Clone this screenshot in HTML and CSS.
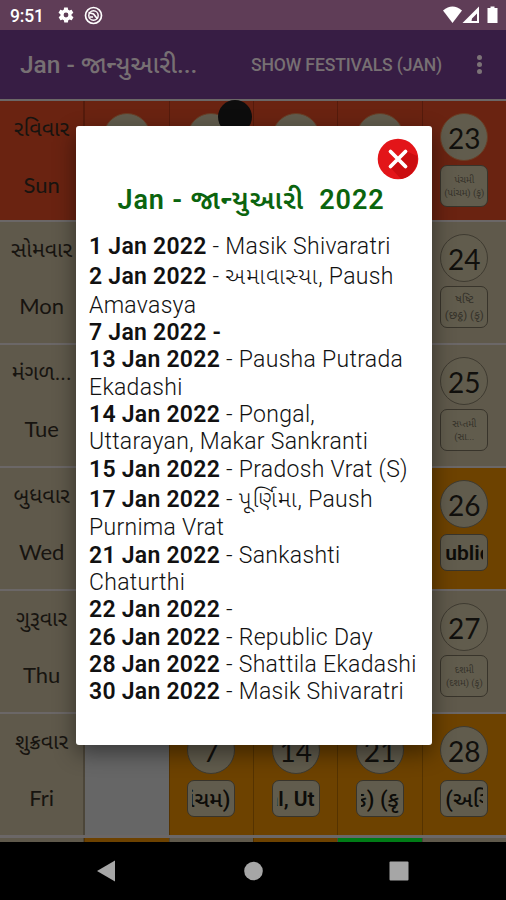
FILE: index.html
```
<!DOCTYPE html>
<html lang="gu">
<head>
  <meta charset="UTF-8">
  <title>Gujarati Calendar 2022</title>
  <link rel="stylesheet" href="styles.css">
</head>
<body>

<div class="screen">
  <div class="status-bar">
    <span class="clock">9:51</span>
    <svg class="gear" width="18" height="18" viewBox="0 0 24 24"><path fill="#fff" fill-rule="evenodd" d="M19.4 13a7.500 7.500 0 0 0 0-2l2.100-1.600c.2-.2.2-.4.1-.6l-2-3.500c-.1-.2-.4-.3-.6-.2l-2.500 1a7 7 0 0 0-1.700-1l-.4-2.600c0-.3-.2-.5-.5-.5h-4c-.2 0-.4.2-.5.4l-.4 2.700a7 7 0 0 0-1.700 1l-2.500-1c-.2-.1-.5 0-.6.2l-2 3.500c-.1.200-.1.500.1.600L4.600 11a8 8 0 0 0 0 2l-2.100 1.600c-.2.200-.2.400-.1.600l2 3.500c.1.200.4.300.6.200l2.500-1c.5.400 1.100.7 1.700 1l.4 2.600c0 .3.200.5.500.5h4c.2 0 .5-.2.500-.4l.4-2.700a7 7 0 0 0 1.700-1l2.500 1c.2.100.5 0 .6-.2l2-3.500c.1-.2.1-.5-.1-.6zM12 15.200a3.200 3.200 0 1 1 0-6.400 3.200 3.200 0 0 1 0 6.400z"/></svg>
    <svg class="ring" width="19" height="19" viewBox="0 0 19 19" fill="none" stroke="#fff"><circle cx="9.500" cy="9.500" r="8" stroke-width="1.700"/><circle cx="9.500" cy="9.500" r="4.700" stroke-width="1.500"/><path d="M4.500 6.500l5 1.500 4 5M9 11h-3" stroke-width="1.700"/></svg>
    <svg class="signals" width="57" height="18" viewBox="0 0 57 18" fill="#fff"><path d="M0 4.500Q9.500-3.500 19 4.500L9.500 17z"/><path fill-rule="evenodd" d="M19.500 17L36 .5V17zM28.500 15h5.500V7.500l-5 5z"/><path d="M44.500 2h3V.5h4V2h3v15h-10z"/></svg>
  </div>

  <div class="app-bar">
    <span class="app-title">Jan - જાન્યુઆરી...</span>
    <span class="app-action">SHOW FESTIVALS (JAN)</span>
    <div class="menu"><i></i><i></i><i></i></div>
  </div>

  <div class="calendar">
    <div class="row sunday">
      <div class="day"><b>રવિવાર</b><span>Sun</span></div>
      <div class="cell"><div class="num">30</div></div>
      <div class="cell"><div class="num">2</div><div class="moon"></div></div>
      <div class="cell"><div class="num">9</div></div>
      <div class="cell"><div class="num">16</div></div>
      <div class="cell"><div class="num">23</div><div class="tithi">પંચમી<br>(પાંચમ) (કૃ)</div></div>
    </div>
    <div class="row">
      <div class="day"><b>સોમવાર</b><span>Mon</span></div>
      <div class="cell"></div>
      <div class="cell"></div>
      <div class="cell"></div>
      <div class="cell"></div>
      <div class="cell"><div class="num">24</div><div class="tithi large">ષષ્ટિ<br>(છઠ્ઠ) (કૃ)</div></div>
    </div>
    <div class="row">
      <div class="day"><b>મંગળ...</b><span>Tue</span></div>
      <div class="cell"></div>
      <div class="cell"></div>
      <div class="cell"></div>
      <div class="cell"></div>
      <div class="cell"><div class="num">25</div><div class="tithi">સપ્તમી<br>(સા...</div></div>
    </div>
    <div class="row">
      <div class="day"><b>બુધવાર</b><span>Wed</span></div>
      <div class="cell"></div>
      <div class="cell"></div>
      <div class="cell"></div>
      <div class="cell"></div>
      <div class="cell festival"><div class="num">26</div><div class="event start"><span>ublic</span></div></div>
    </div>
    <div class="row">
      <div class="day"><b>ગુરૂવાર</b><span>Thu</span></div>
      <div class="cell"></div>
      <div class="cell"></div>
      <div class="cell"></div>
      <div class="cell"></div>
      <div class="cell"><div class="num">27</div><div class="tithi">દશમી<br>(દશમ) (કૃ)</div></div>
    </div>
    <div class="row">
      <div class="day"><b>શુક્રવાર</b><span>Fri</span></div>
      <div class="cell empty"></div>
      <div class="cell festival"><div class="num">7</div><div class="event end gu"><span>પંચમ)</span></div></div>
      <div class="cell festival"><div class="num">14</div><div class="event end"><span>al, Ut</span></div></div>
      <div class="cell festival"><div class="num">21</div><div class="event end gu"><span>ક) (કૃ</span></div></div>
      <div class="cell festival"><div class="num">28</div><div class="event start gu"><span>(અગિ</span></div></div>
    </div>
    <div class="row last">
      <div class="day"></div>
      <div class="cell festival"></div>
      <div class="cell"></div>
      <div class="cell festival"></div>
      <div class="cell today"></div>
      <div class="cell"></div>
    </div>
  </div>

  <div class="nav-bar">
    <svg width="506" height="58" viewBox="0 0 506 58" fill="#a6a6a6"><path d="M115 18.500v21L97 29z"/><circle cx="253.500" cy="29" r="9.300"/><rect x="389.500" y="19.500" width="19" height="19" rx="1"/></svg>
  </div>

  <div class="dialog">
    <svg class="close" width="42" height="42" viewBox="0 0 42 42"><circle cx="21" cy="21" r="20.300" fill="#e31519"/><path d="M29 13L40 18A20 20 0 0 1 24 41L13 29z" fill="#cb0d10"/><path d="M13.500 13.500l15 15M28.500 13.500l-15 15" stroke="#fff" stroke-width="3.800" stroke-linecap="round"/></svg>
    <h2>Jan - જાન્યુઆરી&nbsp; 2022</h2>
    <div class="list">
      <p><b>1 Jan 2022</b> - Masik Shivaratri</p>
      <p class="gu"><b>2 Jan 2022</b> - <i>અમાવાસ્યા</i>, Paush<br>Amavasya</p>
      <p><b>7 Jan 2022 -</b></p>
      <p><b>13 Jan 2022</b> - Pausha Putrada<br>Ekadashi</p>
      <p><b>14 Jan 2022</b> - Pongal,<br>Uttarayan, Makar Sankranti</p>
      <p><b>15 Jan 2022</b> - Pradosh Vrat (S)</p>
      <p class="gu"><b>17 Jan 2022</b> - <i>પૂર્ણિમા</i>, Paush<br>Purnima Vrat</p>
      <p><b>21 Jan 2022</b> - Sankashti<br>Chaturthi</p>
      <p><b>22 Jan 2022</b> -</p>
      <p><b>26 Jan 2022</b> - Republic Day</p>
      <p><b>28 Jan 2022</b> - Shattila Ekadashi</p>
      <p><b>30 Jan 2022</b> - Masik Shivaratri</p>
    </div>
  </div>
</div>

</body>
</html>
```
FILE: styles.css
```
body {
  margin: 0;
  background: #000;
  font-family: Roboto, 'Noto Sans Gujarati', 'Noto Sans', sans-serif;
}
.screen {
  position: relative;
  width: 506px;
  height: 900px;
  overflow: hidden;
  display: flex;
  flex-direction: column;
}
.status-bar {
  display: flex;
  align-items: center;
  height: 30px;
  padding: 0 8px 0 10px;
  background: #5f3d57;
  color: #fff;
}
.clock {
  width: 47px;
  font-size: 17.500px;
  font-weight: 500;
  letter-spacing: -0.2px;
  padding-top: 2px;
}
.gear {
  margin-right: 9px;
}
.signals {
  margin-left: auto;
  margin-right: -2px;
}
.app-bar {
  display: flex;
  align-items: center;
  height: 69px;
  padding: 0 24px 0 20px;
  background: #371d44;
  color: #777073;
  font-weight: 500;
}
.app-title {
  width: 231px;
  padding-top: 4px;
  font-size: 24.500px;
  font-weight: 500;
  letter-spacing: 0;
  white-space: nowrap;
}
.app-action {
  font-size: 17.600px;
  letter-spacing: -0.15px;
  white-space: nowrap;
}
.menu {
  margin-left: auto;
  display: flex;
  flex-direction: column;
  gap: 2px;
}
.menu i {
  width: 5px;
  height: 5px;
  border-radius: 50%;
  background: #7c7377;
}
.calendar {
  height: 743px;
  overflow: hidden;
}
.row {
  display: grid;
  grid-template-columns: repeat(6, 1fr);
  height: 122.900px;
  box-sizing: border-box;
  border-top: 2px solid #6b6767;
  background: #5f594b;
}
.sunday {
  height: 121.400px;
  background: #6a2311;
}
.day {
  display: flex;
  flex-direction: column;
  align-items: center;
  border-right: 1px solid #4c4639;
  color: #171410;
}
.day b {
  height: 61px;
  line-height: 55px;
  font-size: 21.500px;
  font-weight: 400;
  white-space: nowrap;
}
.day span {
  font-family: Lato, sans-serif;
  font-size: 22px;
  line-height: 46px;
}
.sunday .day, .sunday .cell {
  border-color: #551b0c;
}
.cell {
  position: relative;
  display: flex;
  flex-direction: column;
  align-items: center;
  padding-top: 12px;
  border-left: 1px solid #4c4639;
  min-width: 0;
}
.festival {
  background: #6d4200;
  border-color: #553300;
}
.empty {
  background: #666;
}
.today {
  background: #007b16;
}
.num {
  box-sizing: border-box;
  width: 48px;
  height: 48px;
  border: 1px solid #3f3b31;
  border-radius: 50%;
  background: #615c4d;
  color: #11100d;
  font-family: Lato, sans-serif;
  font-size: 28px;
  line-height: 49px;
  text-align: center;
}
.sunday .num {
  border-color: #6a3d24;
}
.tithi, .event {
  box-sizing: border-box;
  width: 48px;
  border: 1px solid #38342b;
  border-radius: 7px;
  background: #615c4d;
  overflow: hidden;
  white-space: nowrap;
}
.tithi {
  height: 42px;
  margin-top: 4px;
  padding-top: 7px;
  color: #35322a;
  font-size: 9.500px;
  line-height: 13px;
  text-align: center;
}
.tithi.large {
  font-size: 11.500px;
  line-height: 16px;
  padding-top: 4px;
}
.event {
  display: flex;
  justify-content: center;
  height: 37px;
  margin-top: 6px;
  padding: 0 4px;
  color: #0d0c09;
  font-size: 21px;
  font-weight: 600;
  line-height: 37px;
}
.event.gu {
  font-size: 22px;
  font-weight: 500;
}
.event span {
  overflow: hidden;
  display: flex;
  justify-content: center;
}
.event.start span {
  justify-content: flex-start;
}
.event.end span {
  justify-content: flex-end;
}
.moon {
  position: absolute;
  left: 48px;
  top: -1px;
  width: 34px;
  height: 34px;
  border-radius: 50%;
  background: #0d0d0d;
}
.last {
  height: 10px;
  border-top-width: 3px;
}
.nav-bar {
  height: 58px;
  background: #000;
}
.dialog {
  position: absolute;
  left: 76px;
  top: 126px;
  width: 356px;
  height: 619px;
  box-sizing: border-box;
  padding: 12px 13px;
  border-radius: 3px;
  background: #fff;
  box-shadow: 0 8px 22px rgba(0,0,0,0.45);
}
.close {
  display: block;
  margin-left: auto;
}
h2 {
  margin: 0 0 13px;
  padding-right: 6px;
  height: 40px;
  line-height: 41px;
  text-align: center;
  color: #0b640e;
  font-size: 27px;
  font-weight: 600;
  letter-spacing: 0.9px;
  white-space: nowrap;
}
.list {
  color: #111;
  font-size: 23px;
  font-weight: 300;
  letter-spacing: 0.3px;
  line-height: 27.300px;
  white-space: nowrap;
}
.list p {
  margin: 0;
}
.list .gu {
  padding-top: 3px;
}
.list .gu::first-line {
  line-height: 28.500px;
}
.list i {
  font-style: normal;
  letter-spacing: 0.9px;
}
.list b {
  font-weight: 600;
  letter-spacing: 0.25px;
}
```
